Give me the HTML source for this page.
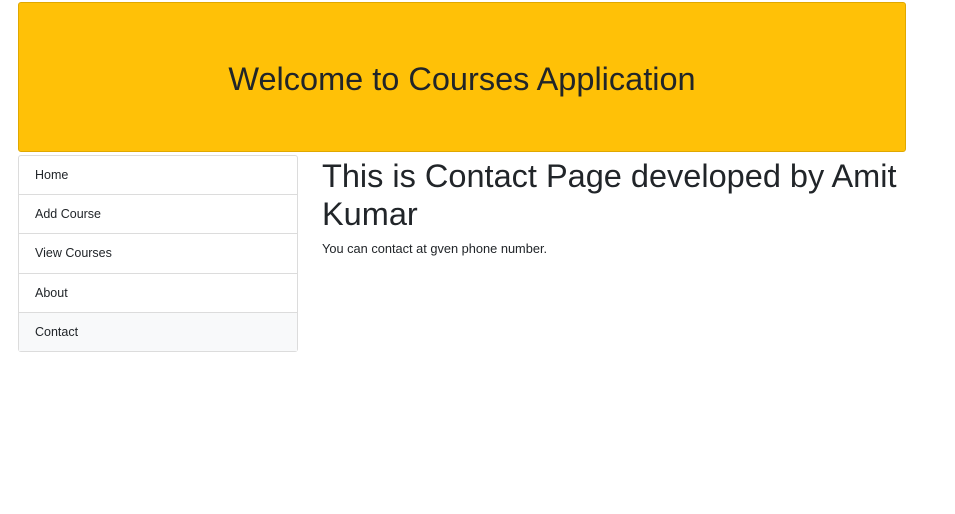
<!DOCTYPE html>
<html><head><style>
body{margin:0;background:#fff;font-family:"Liberation Sans",sans-serif;color:#212529;width:955px;height:514px;overflow:hidden;position:relative}
.hdr{position:absolute;left:18px;top:2px;width:888px;height:150px;background:#ffc107;border:1px solid #e0a800;border-radius:3px;display:flex;align-items:center;justify-content:center;font-size:32.5px;font-weight:500;padding-top:4px;box-sizing:border-box}
.list{position:absolute;left:18px;top:155px;width:278px;border:1px solid #dcdcdc;border-radius:3px}
.list div{height:38.2px;line-height:39px;padding-left:16px;font-size:12.5px;border-top:1px solid #dcdcdc}
.list div:first-child{border-top:none}
.list div.act{background:#f8f9fa}
h1{position:absolute;left:322px;top:157px;margin:0;font-size:32.5px;font-weight:500;line-height:38px;width:620px}
p{position:absolute;left:322px;top:241px;margin:0;font-size:12.8px}
</style></head><body>
<div class="hdr">Welcome to Courses Application</div>
<div class="list"><div>Home</div><div>Add Course</div><div>View Courses</div><div>About</div><div class="act">Contact</div></div>
<h1>This is Contact Page developed by Amit Kumar</h1>
<p>You can contact at gven phone number.</p>
</body></html>
